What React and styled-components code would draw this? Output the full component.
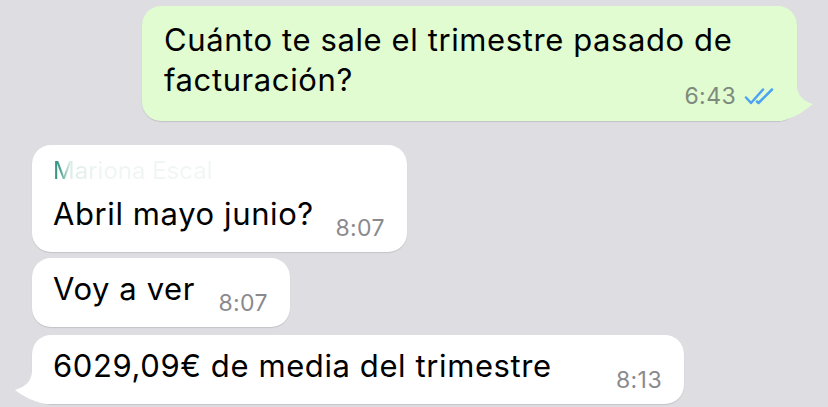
import React from "react";
import styled, { createGlobalStyle } from "styled-components";

const GlobalStyle = createGlobalStyle`
  html, body {
    margin: 0;
    padding: 0;
    background: #dddde2;
  }
  body {
    font-family: Inter, "Liberation Sans", Arial, sans-serif;
    -webkit-font-smoothing: antialiased;
  }
`;

const Chat = styled.div`
  display: flex;
  flex-direction: column;
  width: 828px;
  height: 407px;
  box-sizing: border-box;
  padding: 6px 31px 0 32px;
  overflow: hidden;
`;

const Row = styled.div`
  display: flex;
  justify-content: ${p => (p.out ? "flex-end" : "flex-start")};
  margin-top: ${p => p.gap || 0}px;
`;

const Bubble = styled.div`
  position: relative;
  box-sizing: border-box;
  width: ${p => p.w}px;
  padding: ${p => (p.out ? "14px 22px 11px 22px" : "11px 22px 18px 21px")};
  border-radius: 19px;
  background: ${p => (p.out ? "#e0fcd0" : "#ffffff")};
  box-shadow: 0 1px 1px rgba(0, 0, 0, 0.12);
`;

const Line = styled.div`
  display: flex;
  align-items: flex-end;
`;

const Text = styled.div`
  font-size: 31px;
  line-height: 40px;
  color: #000;
  letter-spacing: 0.6px;
`;

const Sender = styled.div`
  font-size: 24px;
  line-height: 30px;
  margin-bottom: 8px;
  background: linear-gradient(90deg, #2a8b7b 0px, #4a9e90 7px, #dcece8 17px, #eef5f3 45px, #f5f8f7 100%);
  -webkit-background-clip: text;
  background-clip: text;
  color: transparent;
`;

const Meta = styled.div`
  display: flex;
  align-items: center;
  gap: 8px;
  margin-left: auto;
  margin-bottom: -8px;
  font-size: 23px;
  line-height: 28px;
  color: ${p => (p.out ? "#7f8a7f" : "#8a8a8e")};
  letter-spacing: 0.4px;
`;

const OutMeta = styled(Meta)`
  justify-content: flex-end;
  margin-top: -18px;
  margin-bottom: 0;
`;

const Tail = styled.svg`
  position: absolute;
  bottom: 0;
  overflow: visible;
  ${p => (p.out ? "right: -16px;" : "left: -18px;")}
`;

const Checks = () => (
  <svg width="31" height="17" viewBox="0 0 31 17" fill="none">
    <path d="M2 9.5 L7 15 L19 1.5" stroke="#4ba3f2" strokeWidth="2.5" strokeLinecap="round" strokeLinejoin="round" />
    <path d="M13 13.5 L14.5 15 L28 1.5" stroke="#4ba3f2" strokeWidth="2.5" strokeLinecap="round" strokeLinejoin="round" />
  </svg>
);

const OutTail = () => (
  <Tail out width="36" height="36" viewBox="0 0 36 36">
    <path d="M20 0 C20 9 25 16 36 19 C29 24 21 32 4 36 L0 36 L0 0 Z" fill="#e0fcd0" />
  </Tail>
);

const InTail = () => (
  <Tail width="40" height="34" viewBox="0 0 40 34">
    <path d="M18 0 C18 9 14 16 1 20 C8 25 16 31 32 34 L40 34 L40 0 Z" fill="#ffffff" />
  </Tail>
);

export default function App() {
  return (
    <>
      <GlobalStyle />
      <Chat>
        <Row out>
          <Bubble out w={655}>
            <Text>
              Cuánto te sale el trimestre pasado de
              <br />
              facturación?
            </Text>
            <OutMeta out>
              <span>6:43</span>
              <Checks />
            </OutMeta>
            <OutTail />
          </Bubble>
        </Row>

        <Row gap={24}>
          <Bubble w={375}>
            <Sender>Mariona Escal</Sender>
            <Line>
              <Text>Abril mayo junio?</Text>
              <Meta>8:07</Meta>
            </Line>
          </Bubble>
        </Row>

        <Row gap={6}>
          <Bubble w={258}>
            <Line>
              <Text>Voy a ver</Text>
              <Meta>8:07</Meta>
            </Line>
          </Bubble>
        </Row>

        <Row gap={8}>
          <Bubble w={652}>
            <Line>
              <Text>6029,09€ de media del trimestre</Text>
              <Meta>8:13</Meta>
            </Line>
            <InTail />
          </Bubble>
        </Row>
      </Chat>
    </>
  );
}
